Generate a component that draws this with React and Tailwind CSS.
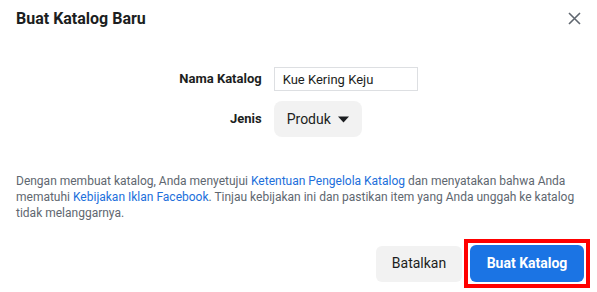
export default function App() {
  return (
    <div className="w-[597px] h-[292px] bg-white text-[#1c1e21] font-['Roboto','Liberation_Sans',sans-serif] flex flex-col">
      {/* header */}
      <div className="flex justify-between items-start pl-4 pr-[16px] pt-[9px]">
        <h1 className="text-[16px] leading-5 font-bold">Buat Katalog Baru</h1>
        <button className="mt-[3px] text-[#606770]" aria-label="Tutup">
          <svg width="13" height="13" viewBox="0 0 13 13" fill="none" stroke="currentColor" strokeWidth="1.6">
            <path d="M1 1 L12 12 M12 1 L1 12" />
          </svg>
        </button>
      </div>

      {/* form */}
      <div className="mt-[38px] grid grid-cols-[auto_auto] justify-center items-center gap-x-3 gap-y-[10px]">
        <label className="text-[13px] font-bold text-right">Nama Katalog</label>
        <input
          defaultValue="Kue Kering Keju"
          className="w-[144px] h-6 border border-[#dddfe2] px-2 text-[13px] text-[#1c1e21] outline-none"
        />
        <label className="text-[13px] font-bold text-right">Jenis</label>
        <div>
          <button className="h-9 w-[88px] rounded-lg bg-[#f2f2f2] flex items-center pl-[13px] gap-[7px] text-[14px]">
            Produk
            <svg width="11" height="7" viewBox="0 0 11 7">
              <path d="M0 0.5 H11 L5.5 6.5 Z" fill="#1c1e21" />
            </svg>
          </button>
        </div>
      </div>

      {/* notice */}
      <p className="mt-[36px] px-4 text-[12px] leading-4 text-[#606770]">
        Dengan membuat katalog, Anda menyetujui{" "}
        <a className="text-[#216fdb]">Ketentuan Pengelola Katalog</a> dan menyatakan bahwa Anda
        mematuhi <a className="text-[#216fdb]">Kebijakan Iklan Facebook</a>. Tinjau kebijakan ini dan
        pastikan item yang Anda unggah ke katalog tidak melanggarnya.
      </p>

      {/* footer */}
      <div className="mt-[18px] flex justify-end items-center gap-[2px] pr-[7px]">
        <button className="w-[86px] h-9 rounded-md bg-[#f2f2f2] text-[14px]">Batalkan</button>
        <div className="border-4 border-[#ff0000] p-[2px]">
          <button className="w-[114px] h-[37px] rounded-md bg-[#1b74e4] text-white text-[14px] font-bold">
            Buat Katalog
          </button>
        </div>
      </div>
    </div>
  );
}
